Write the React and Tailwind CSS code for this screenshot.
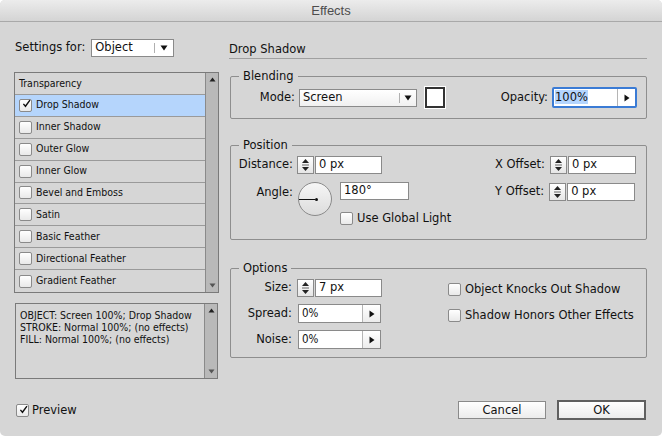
const ui = { fontFamily: '"DejaVu Sans", "Lucida Grande", sans-serif' };
const narrow = { fontFamily: '"DejaVu Sans Condensed", "DejaVu Sans", sans-serif' };

function Check({ checked }) {
  return (
    <span className="w-[13px] h-[13px] shrink-0 border border-[#8a8a8a] rounded-[2px] bg-gradient-to-b from-white to-[#e9e9e9] flex items-center justify-center">
      {checked && (
        <svg width="13" height="13" viewBox="0 0 13 13" className="-mt-[3px] ml-[2px]">
          <path d="M2 7 L5 10.5 L11.5 1.5" fill="none" stroke="#111" strokeWidth="2" />
        </svg>
      )}
    </span>
  );
}

function Spinner() {
  return (
    <span className="w-[17px] h-[18px] shrink-0 border border-[#8a8a8a] bg-gradient-to-b from-white to-[#e6e6e6] flex items-center justify-center">
      <svg width="9" height="14" viewBox="0 0 9 14">
        <path d="M4.5 1 L8 5 L1 5 Z" fill="#222" />
        <line x1="1" y1="7" x2="8" y2="7" stroke="#666" strokeWidth="1" />
        <path d="M4.5 13 L8 9 L1 9 Z" fill="#222" />
      </svg>
    </span>
  );
}

function TextBox({ value, w }) {
  return (
    <span className={`h-[18px] border border-[#8a8a8a] bg-white flex items-center pl-[3px] text-[11.5px] text-[#111] ${w}`} style={ui}>
      {value}
    </span>
  );
}

function Combo({ value, w }) {
  return (
    <span className={`h-[19px] border border-[#8a8a8a] bg-white flex items-center text-[11.5px] text-[#111] ${w}`} style={narrow}>
      <span className="flex-1 pl-[3px]">{value}</span>
      <span className="w-[18px] h-full border-l border-[#b5b5b5] bg-gradient-to-b from-white to-[#ececec] flex items-center justify-center">
        <svg width="6" height="8" viewBox="0 0 6 8"><path d="M0.5 0.5 L5.5 4 L0.5 7.5 Z" fill="#111" /></svg>
      </span>
    </span>
  );
}

function Group({ title, h, children }) {
  return (
    <div className={`relative border border-[#8e8e8e] rounded-[2px] ${h}`}>
      <span className="absolute -top-[9px] left-[8px] px-[4px] bg-[#d6d6d6] text-[11.5px] leading-[16px] text-[#111]" style={ui}>
        {title}
      </span>
      {children}
    </div>
  );
}

const effects = [
  "Inner Shadow",
  "Outer Glow",
  "Inner Glow",
  "Bevel and Emboss",
  "Satin",
  "Basic Feather",
  "Directional Feather",
  "Gradient Feather",
];

function ScrollBar() {
  return (
    <div className="w-[13px] shrink-0 border-l border-[#8a8a8a] bg-[#b9b9b9] flex flex-col justify-between items-center py-[4px]">
      <svg width="7" height="5" viewBox="0 0 7 5"><path d="M3.5 0.5 L6.5 4.5 L0.5 4.5 Z" fill="#222" /></svg>
      <svg width="7" height="5" viewBox="0 0 7 5"><path d="M0.5 0.5 L6.5 0.5 L3.5 4.5 Z" fill="#555" /></svg>
    </div>
  );
}

export default function App() {
  return (
    <div className="w-[662px] h-[436px] bg-white">
      <div className="w-[662px] h-[436px] bg-[#d6d6d6] rounded-[5px] overflow-hidden flex flex-col">
        <div className="h-[22px] shrink-0 bg-gradient-to-b from-[#ececec] to-[#d4d4d4] border-b border-[#a9a9a9] flex items-center justify-center">
          <span className="text-[13px] text-[#4d4d4d]" style={{ fontFamily: '"Liberation Sans", Arial, sans-serif' }}>Effects</span>
        </div>

        <div className="flex flex-1 text-[#111]">
          {/* left column */}
          <div className="w-[205px] ml-[14px] pt-[17px] flex flex-col">
            <div className="h-[18px] flex items-center">
              <span className="text-[11.5px] ml-[1px]" style={ui}>Settings for:</span>
              <span className="ml-[6px] w-[83px] h-[18px] border border-[#8a8a8a] bg-white flex items-center text-[11.5px]" style={ui}>
                <span className="flex-1 pl-[3px]">Object</span>
                <span className="w-px h-[10px] bg-[#b0b0b0]" />
                <span className="w-[18px] flex justify-center">
                  <svg width="8" height="6" viewBox="0 0 8 6"><path d="M0.5 0.5 L7.5 0.5 L4 5.5 Z" fill="#111" /></svg>
                </span>
              </span>
            </div>

            <div className="mt-[15px] h-[221px] border border-[#7a7a7a] flex" style={narrow}>
              <div className="flex-1 flex flex-col">
                <div className="h-[22px] border-b border-[#9a9a9a] flex items-center pl-[4px] pt-[1px] text-[10.5px]">Transparency</div>
                <div className="h-[22px] border-b border-[#9a9a9a] bg-[#b5d5fc] flex items-center pl-[4px] gap-[4px] text-[10.5px]">
                  <Check checked />
                  <span>Drop Shadow</span>
                </div>
                {effects.map((e, i) => (
                  <div
                    key={e}
                    className={`h-[22px] flex items-center pl-[4px] gap-[4px] text-[10.5px] ${i < effects.length - 1 ? "border-b border-[#9a9a9a]" : ""}`}
                  >
                    <Check />
                    <span>{e}</span>
                  </div>
                ))}
              </div>
              <ScrollBar />
            </div>

            <div className="mt-[10px] ml-[1px] w-[203px] h-[76px] border border-[#7a7a7a] flex" style={narrow}>
              <div className="flex-1 pt-[5px] pl-[4px] text-[10.5px] leading-[12px]">
                <div>OBJECT: Screen 100%; Drop Shadow</div>
                <div>STROKE: Normal 100%; (no effects)</div>
                <div>FILL: Normal 100%; (no effects)</div>
              </div>
              <ScrollBar />
            </div>

            <div className="mt-[23px] ml-[2px] flex items-center gap-[3px]">
              <Check checked />
              <span className="text-[11.5px]" style={ui}>Preview</span>
            </div>
          </div>

          {/* right column */}
          <div className="w-[418px] ml-[10px] pt-[19px] flex flex-col">
            <div className="h-[18px] border-b border-[#a0a0a0] text-[11.5px] leading-[16px]" style={ui}>Drop Shadow</div>

            <div className="mt-[17px] ml-[1px]">
              <Group title="Blending" h="h-[43px]">
                <div className="pt-[10px] flex items-center text-[11.5px]" style={ui}>
                  <span className="w-[64px] text-right">Mode:</span>
                  <span className="ml-[4px] w-[118px] h-[18px] border border-[#8a8a8a] bg-gradient-to-b from-white to-[#f0f0f0] flex items-center">
                    <span className="flex-1 pl-[3px]">Screen</span>
                    <span className="w-px h-[10px] bg-[#b0b0b0]" />
                    <span className="w-[16px] flex justify-center">
                      <svg width="8" height="6" viewBox="0 0 8 6"><path d="M0.5 0.5 L7.5 0.5 L4 5.5 Z" fill="#111" /></svg>
                    </span>
                  </span>
                  <span className="ml-[8px] w-[20px] h-[21px] border-2 border-[#333] bg-white outline outline-1 outline-white" />
                  <span className="flex-1 text-right">Opacity:</span>
                  <span className="ml-[4px] mr-[9px] w-[85px] h-[21px] border-2 border-[#3a7bd5] rounded-[2px] bg-white flex items-center">
                    <span className="flex-1 pl-[1px]"><span className="bg-[#b4d5fe]">100%</span></span>
                    <span className="w-[18px] h-full border-l border-[#b5b5b5] flex items-center justify-center">
                      <svg width="6" height="8" viewBox="0 0 6 8"><path d="M0.5 0.5 L5.5 4 L0.5 7.5 Z" fill="#111" /></svg>
                    </span>
                  </span>
                </div>
              </Group>
            </div>

            <div className="mt-[26px] ml-[1px]">
              <Group title="Position" h="h-[95px]">
                <div className="pt-[10px] pr-[10px] flex justify-between text-[11.5px]" style={ui}>
                  <div className="flex flex-col">
                    <div className="flex items-center">
                      <span className="w-[62px] text-right">Distance:</span>
                      <span className="ml-[4px] flex gap-[1px]">
                        <Spinner />
                        <TextBox value="0 px" w="w-[67px]" />
                      </span>
                    </div>
                    <div className="mt-[8px] flex items-start">
                      <span className="w-[62px] text-right mt-[2px]">Angle:</span>
                      <span className="ml-[5px] w-[34px] h-[34px] rounded-full border border-[#8a8a8a] bg-gradient-to-b from-[#f6f6f6] to-[#dcdcdc] flex items-center">
                        <span className="w-[16px] h-px bg-[#111]" />
                        <span className="w-[3px] h-[3px] rounded-full bg-[#111]" />
                      </span>
                      <div className="ml-[8px] flex flex-col">
                        <TextBox value="180°" w="w-[69px]" />
                        <div className="mt-[10px] flex items-center gap-[4px]">
                          <Check />
                          <span>Use Global Light</span>
                        </div>
                      </div>
                    </div>
                  </div>
                  <div className="flex flex-col gap-[9px]">
                    <div className="flex items-center">
                      <span>X Offset:</span>
                      <span className="ml-[5px] flex gap-[1px]">
                        <Spinner />
                        <TextBox value="0 px" w="w-[68px]" />
                      </span>
                    </div>
                    <div className="flex items-center">
                      <span>Y Offset:</span>
                      <span className="ml-[5px] flex gap-[1px]">
                        <Spinner />
                        <TextBox value="0 px" w="w-[68px]" />
                      </span>
                    </div>
                  </div>
                </div>
              </Group>
            </div>

            <div className="mt-[28px] ml-[1px]">
              <Group title="Options" h="h-[90px]">
                <div className="pt-[10px] flex text-[11.5px]" style={ui}>
                  <div className="flex flex-col gap-[7px]">
                    <div className="flex items-center">
                      <span className="w-[61px] text-right">Size:</span>
                      <span className="ml-[5px] flex gap-[1px]">
                        <Spinner />
                        <TextBox value="7 px" w="w-[67px]" />
                      </span>
                    </div>
                    <div className="flex items-center">
                      <span className="w-[61px] text-right">Spread:</span>
                      <span className="ml-[6px]"><Combo value="0%" w="w-[83px]" /></span>
                    </div>
                    <div className="flex items-center">
                      <span className="w-[61px] text-right">Noise:</span>
                      <span className="ml-[6px]"><Combo value="0%" w="w-[83px]" /></span>
                    </div>
                  </div>
                  <div className="ml-[66px] pt-[2px] flex flex-col gap-[9px]">
                    <div className="flex items-center gap-[4px]">
                      <Check />
                      <span>Object Knocks Out Shadow</span>
                    </div>
                    <div className="flex items-center gap-[4px]">
                      <Check />
                      <span>Shadow Honors Other Effects</span>
                    </div>
                  </div>
                </div>
              </Group>
            </div>

            <div className="mt-[42px] flex justify-end gap-[11px] items-center" style={ui}>
              <button className="w-[88px] h-[18px] border border-[#8a8a8a] bg-gradient-to-b from-white to-[#ececec] text-[11.5px] text-[#111]">Cancel</button>
              <button className="w-[89px] h-[20px] mr-[1px] border-2 border-[#606060] bg-gradient-to-b from-white to-[#ececec] text-[11.5px] text-[#111]">OK</button>
            </div>
          </div>
        </div>
      </div>
    </div>
  );
}
